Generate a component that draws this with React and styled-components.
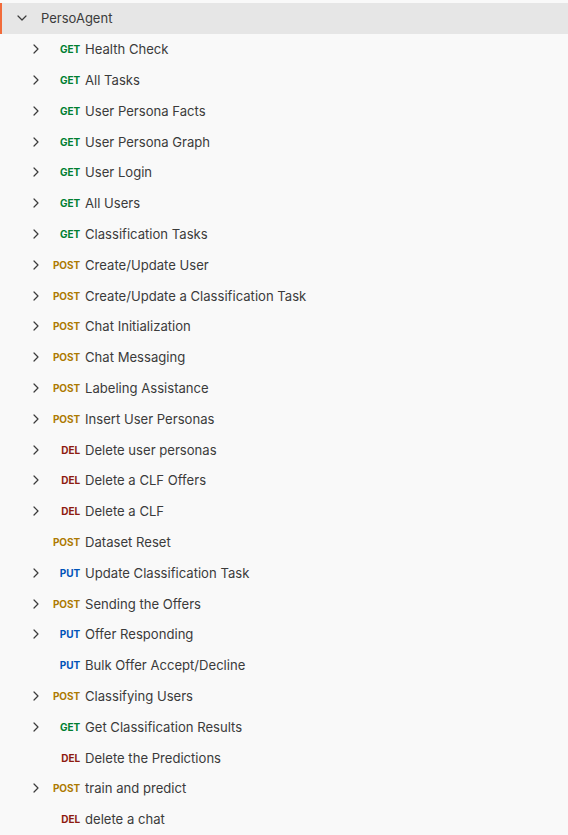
import React from 'react'
import { styled, createGlobalStyle } from 'styled-components';

const GlobalStyle = createGlobalStyle`
  html, body {
    margin: 0;
    padding: 0;
    background: #f9f9f9;
  }
  body {
    font-family: Inter, "Noto Sans", sans-serif;
  }
`;

const Sidebar = styled.div`
  padding-top: 3px;
  background: #f9f9f9;
  min-height: 835px;
`;

const Header = styled.div`
  display: flex;
  align-items: center;
  height: 30.8px;
  background: #e6e6e6;
  border-left: 2px solid #f26b3a;
  padding-left: 14px;
  gap: 13px;
  color: #3b3b3b;
  font-size: 13px;
`;

const Row = styled.div`
  display: flex;
  align-items: center;
  height: 30.8px;
  padding-left: 30px;
  color: #3b3b3b;
  font-size: 13px;
`;

const Chevron = styled.span`
  display: flex;
  align-items: center;
  justify-content: center;
  width: 12px;
  height: 12px;
  color: #3b3b3b;
`;

const Method = styled.span`
  width: 35px;
  margin-left: 3px;
  text-align: right;
  font-size: 10px;
  font-weight: 700;
  letter-spacing: -0.1px;
  color: ${p => p.$color};
`;

const Name = styled.span`
  margin-left: 5px;
  white-space: nowrap;
  font-size: 13.1px;
`;

const COLORS = {
  GET: '#007f31',
  POST: '#ad7a03',
  DEL: '#8e1a10',
  PUT: '#0053b8',
};

const items = [
  ['GET', 'Health Check', true],
  ['GET', 'All Tasks', true],
  ['GET', 'User Persona Facts', true],
  ['GET', 'User Persona Graph', true],
  ['GET', 'User Login', true],
  ['GET', 'All Users', true],
  ['GET', 'Classification Tasks', true],
  ['POST', 'Create/Update User', true],
  ['POST', 'Create/Update a Classification Task', true],
  ['POST', 'Chat Initialization', true],
  ['POST', 'Chat Messaging', true],
  ['POST', 'Labeling Assistance', true],
  ['POST', 'Insert User Personas', true],
  ['DEL', 'Delete user personas', true],
  ['DEL', 'Delete a CLF Offers', true],
  ['DEL', 'Delete a CLF', true],
  ['POST', 'Dataset Reset', false],
  ['PUT', 'Update Classification Task', true],
  ['POST', 'Sending the Offers', true],
  ['PUT', 'Offer Responding', true],
  ['PUT', 'Bulk Offer Accept/Decline', false],
  ['POST', 'Classifying Users', true],
  ['GET', 'Get Classification Results', true],
  ['DEL', 'Delete the Predictions', false],
  ['POST', 'train and predict', true],
  ['DEL', 'delete a chat', false],
];

const Right = () => (
  <svg width="12" height="12" viewBox="0 0 12 12" fill="none">
    <path d="M4 2l4 4-4 4" stroke="currentColor" strokeWidth="1.2" strokeLinecap="round" strokeLinejoin="round" />
  </svg>
);

const Down = () => (
  <svg width="12" height="12" viewBox="0 0 12 12" fill="none">
    <path d="M2 4l4 4 4-4" stroke="currentColor" strokeWidth="1.2" strokeLinecap="round" strokeLinejoin="round" />
  </svg>
);

const App = () => {
  return (
    <Sidebar>
      <GlobalStyle />
      <Header>
        <Chevron><Down /></Chevron>
        <span>PersoAgent</span>
      </Header>
      {items.map(([method, name, hasChildren], i) => (
        <Row key={i}>
          <Chevron>{hasChildren && <Right />}</Chevron>
          <Method $color={COLORS[method]}>{method}</Method>
          <Name>{name}</Name>
        </Row>
      ))}
    </Sidebar>
  )
}

export default App
